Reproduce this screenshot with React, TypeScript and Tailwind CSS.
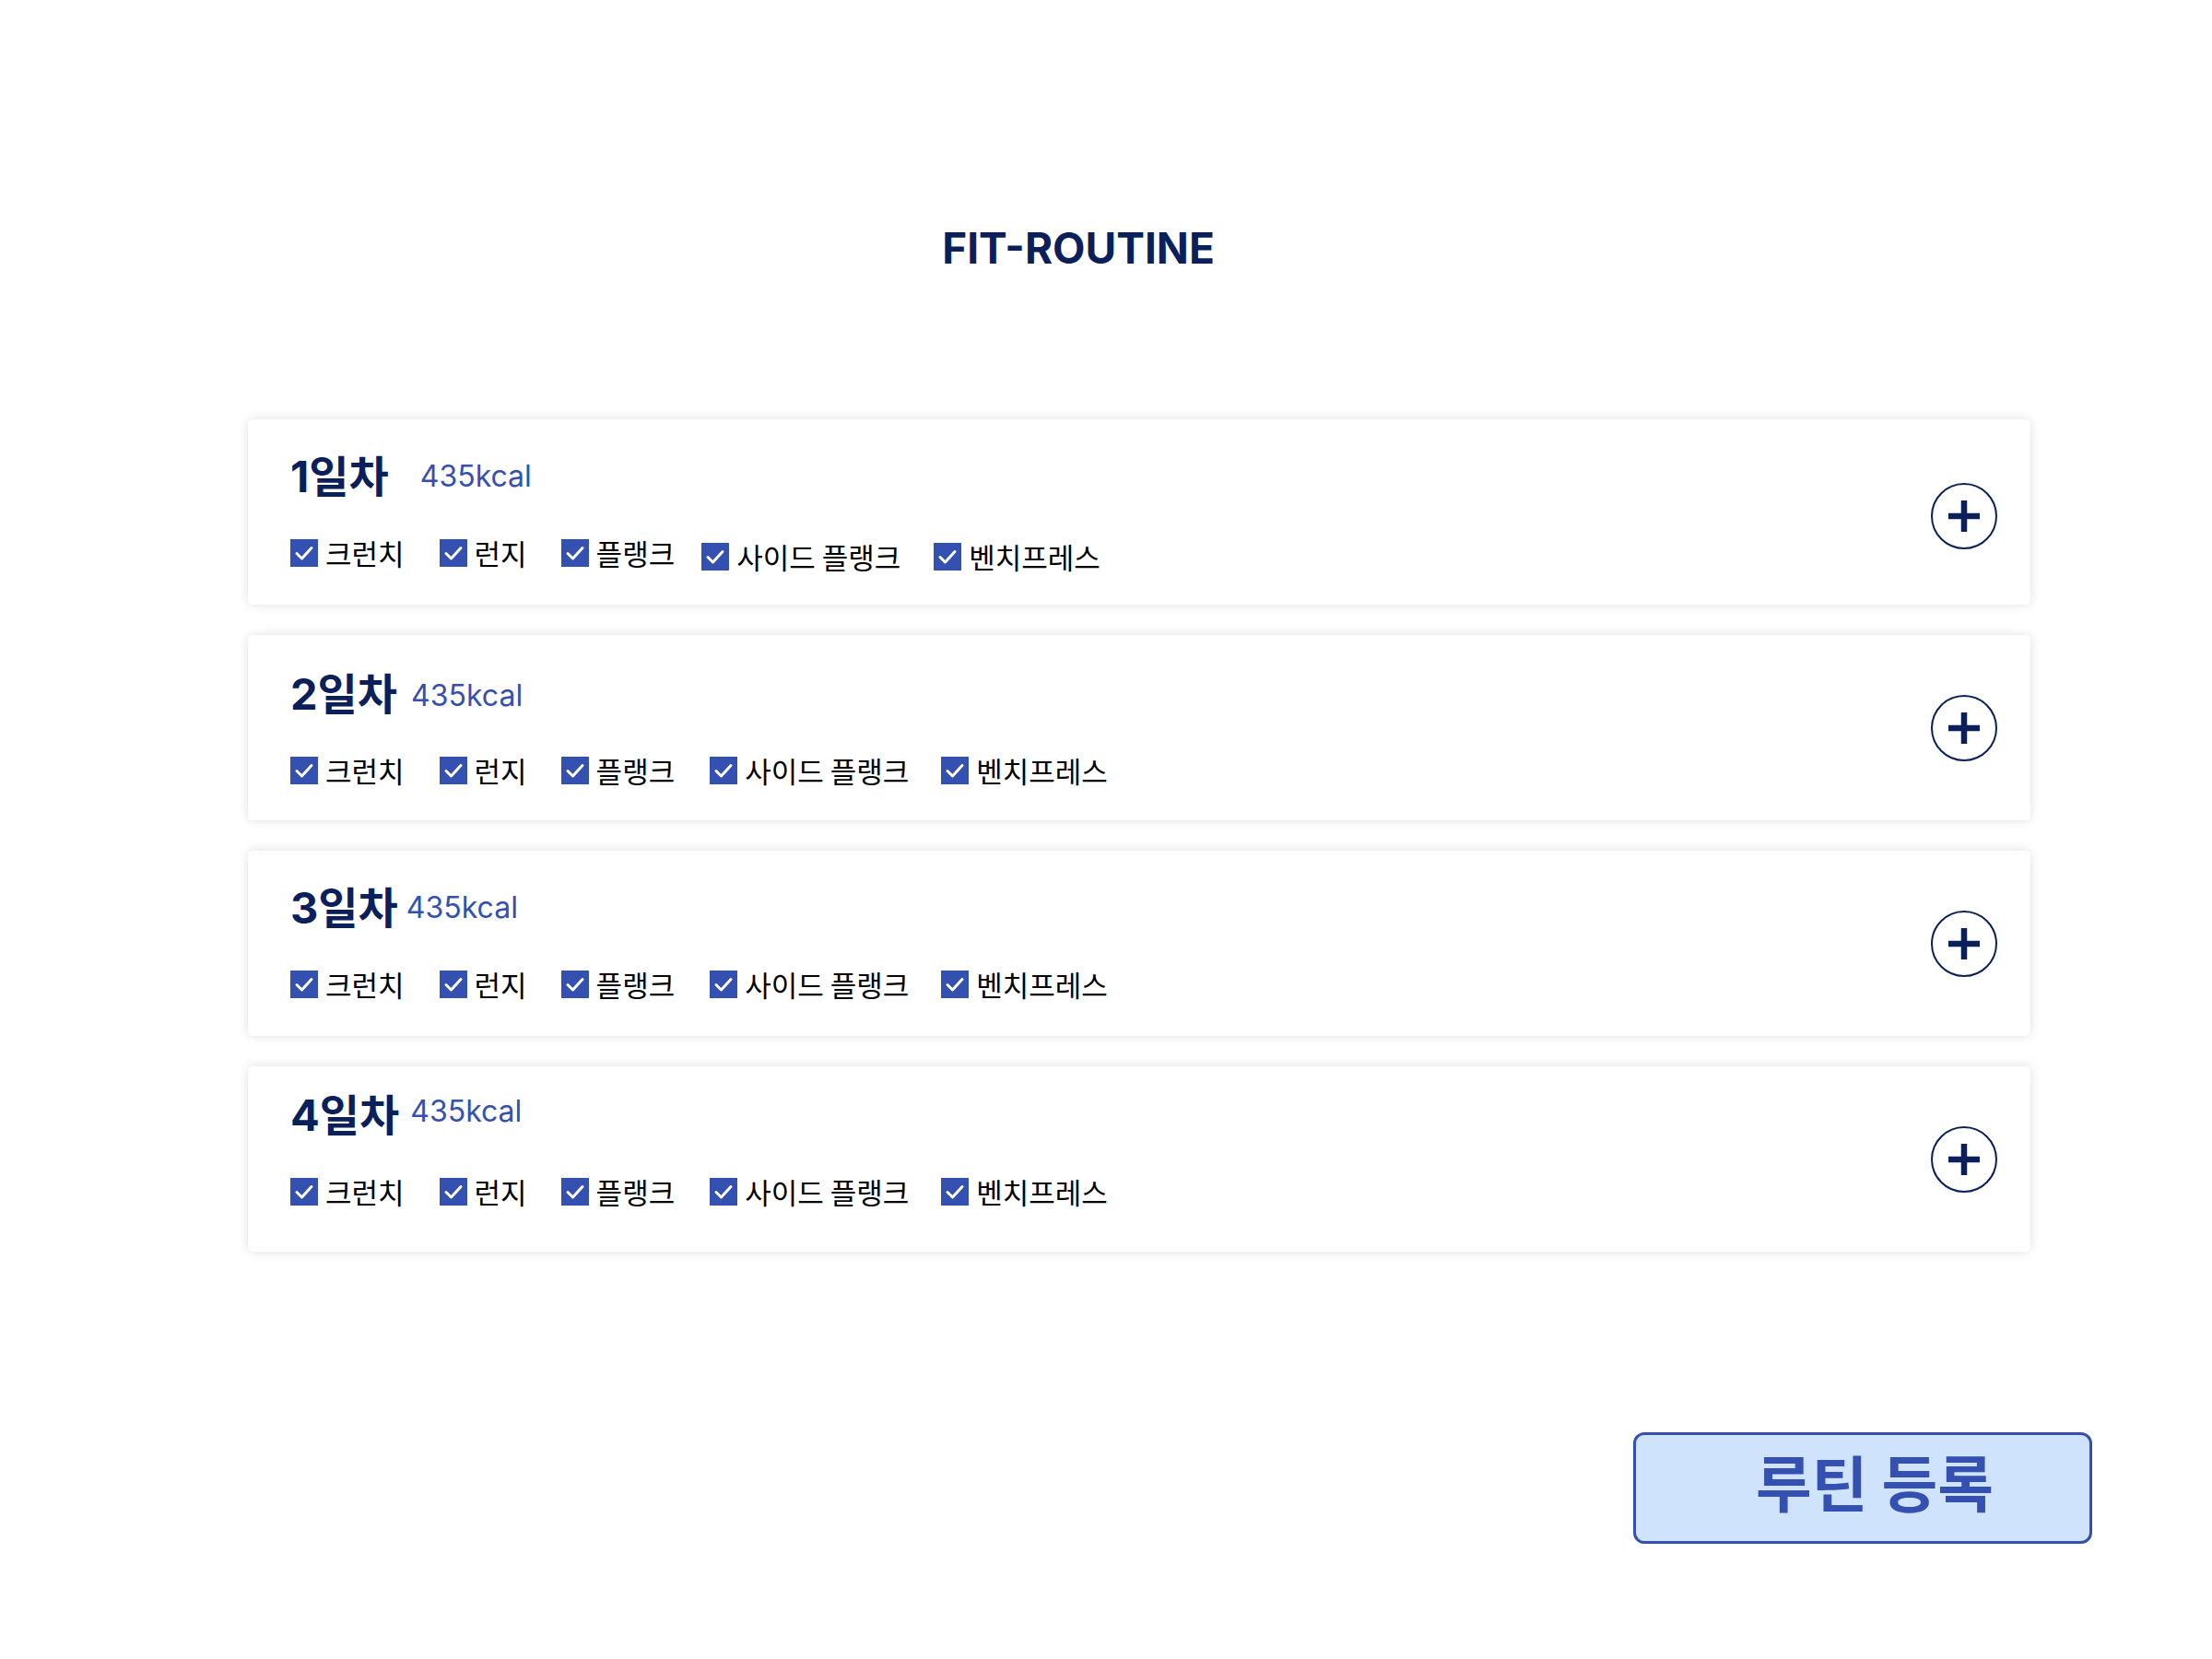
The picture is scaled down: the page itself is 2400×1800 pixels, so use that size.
import React from 'react';

type Exercise = { name: string; gap: string; shift?: boolean };

type Day = {
  label: string;
  kcal: string;
  kcalGap: string;
  kcalShift?: string;
  contentShift?: string;
  plusShift?: string;
  exercises: Exercise[];
};

const names = ['크런치', '런지', '플랭크', '사이드 플랭크', '벤치프레스'];

const defaultGaps = ['', 'ml-[38px]', 'ml-[37px]', 'ml-[38px]', 'ml-[35px]'];
const firstGaps = ['', 'ml-[38px]', 'ml-[37px]', 'ml-[29px]', 'ml-[36px]'];

const days: Day[] = [
  {
    label: '1일차',
    kcal: '435kcal',
    kcalGap: 'ml-[34px]',
    plusShift: 'mt-[8px]',
    exercises: names.map((name, i) => ({ name, gap: firstGaps[i], shift: i >= 3 })),
  },
  {
    label: '2일차',
    kcal: '435kcal',
    kcalGap: 'ml-[15px]',
    kcalShift: 'mt-[3px]',
    exercises: names.map((name, i) => ({ name, gap: defaultGaps[i] })),
  },
  {
    label: '3일차',
    kcal: '435kcal',
    kcalGap: 'ml-[9px]',
    contentShift: 'mb-[4px]',
    exercises: names.map((name, i) => ({ name, gap: defaultGaps[i] })),
  },
  {
    label: '4일차',
    kcal: '435kcal',
    kcalGap: 'ml-[12px]',
    kcalShift: '-mt-[8px]',
    contentShift: 'mb-[22px]',
    exercises: names.map((name, i) => ({ name, gap: defaultGaps[i] })),
  },
];

const CheckBox: React.FC = () => (
  <span className="flex h-[30px] w-[30px] shrink-0 items-center justify-center bg-[#3450b0]">
    <svg width="30" height="30" viewBox="0 0 30 30" fill="none">
      <path d="M7 15.5 L12.5 21 L23 9.5" stroke="white" strokeWidth="3" strokeLinecap="round" strokeLinejoin="round" />
    </svg>
  </span>
);

const PlusButton: React.FC<{ shift?: string }> = ({ shift }) => (
  <button className={`flex h-[72px] w-[72px] shrink-0 items-center justify-center rounded-full border-2 border-[#0b1f5b] bg-white ${shift ?? ''}`}>
    <svg width="40" height="40" viewBox="0 0 40 40">
      <line x1="3" y1="20" x2="37" y2="20" stroke="#0b1f5b" strokeWidth="6.5" />
      <line x1="20" y1="3" x2="20" y2="37" stroke="#0b1f5b" strokeWidth="6.5" />
    </svg>
  </button>
);

const DayCard: React.FC<{ day: Day }> = ({ day }) => (
  <div className="flex h-[201px] items-center justify-between rounded-[5px] bg-white pl-[46px] pr-[36px] shadow-[0_0_12px_rgba(0,0,0,0.13)]">
    <div className={`flex flex-col pt-[2px] ${day.contentShift ?? ''}`}>
      <div className="flex items-center">
        <span className="text-[47px] font-bold leading-[46px] text-[#0b1f5b] font-['Inter','Noto_Sans_CJK_KR',sans-serif]">
          {day.label}
        </span>
        <span className={`text-[32px] leading-[32px] text-[#3450b0] font-['Inter',sans-serif] ${day.kcalGap} ${day.kcalShift ?? ''}`}>
          {day.kcal}
        </span>
      </div>
      <div className="mt-[45px] flex items-start">
        {day.exercises.map((ex) => (
          <label key={ex.name} className={`flex items-center ${ex.gap} ${ex.shift ? 'mt-[4px]' : ''}`}>
            <CheckBox />
            <span className="ml-[8px] whitespace-nowrap text-[31px] leading-[30px] text-black font-['Noto_Sans_CJK_KR',sans-serif]">
              {ex.name}
            </span>
          </label>
        ))}
      </div>
    </div>
    <PlusButton shift={day.plusShift} />
  </div>
);

export default function App() {
  return (
    <div className="min-h-screen w-[2400px] bg-white">
      <h1 className="flex justify-center pr-[60px] pt-[246px] text-[46px] font-bold leading-[46px] text-[#0b1f5b] font-['Inter',sans-serif]">
        FIT-ROUTINE
      </h1>
      <div className="ml-[269px] mt-[163px] flex w-[1934px] flex-col gap-[33px]">
        {days.map((day) => (
          <DayCard key={day.label} day={day} />
        ))}
      </div>
      <div className="mt-[196px] flex justify-end pr-[130px]">
        <button className="flex h-[121px] w-[498px] items-center justify-center rounded-[12px] border-[3px] border-[#3450b0] bg-[#d0e3fd] pb-[18px] pl-[26px] text-[66px] font-bold leading-none text-[#3450b0] font-['Noto_Sans_CJK_KR',sans-serif]">
          루틴 등록
        </button>
      </div>
    </div>
  );
}
